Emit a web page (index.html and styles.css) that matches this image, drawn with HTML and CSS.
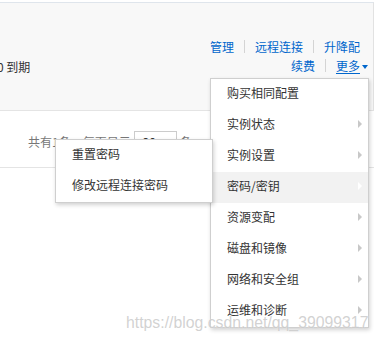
FILE: index.html
```html
<!DOCTYPE html>
<html lang="zh">
<head>
<meta charset="utf-8">
<link rel="stylesheet" href="styles.css">
</head>
<body>
<div class="page">
  <div class="panel">
    <div class="expire"><span class="cut">0 到期</span></div>
    <div class="ops">
      <div class="ops-line first">
        <a class="lnk">管理</a><span class="sep"></span><a class="lnk">远程连接</a><span class="sep"></span><a class="lnk">升降配</a>
      </div>
      <div class="ops-line">
        <a class="lnk">续费</a><span class="sep"></span><a class="lnk more">更多</a><span class="caret"></span>
      </div>
    </div>
  </div>
  <div class="pager">
    <span class="pager-text">共有1条，每页显示</span>
    <span class="pager-box">20</span>
    <span class="pager-text">条</span>
  </div>
</div>

<ul class="menu">
  <li class="item">购买相同配置</li>
  <li class="item sub">实例状态</li>
  <li class="item sub">实例设置</li>
  <li class="item sub active">密码/密钥</li>
  <li class="item sub">资源变配</li>
  <li class="item sub">磁盘和镜像</li>
  <li class="item sub">网络和安全组</li>
  <li class="item sub">运维和诊断</li>
</ul>

<ul class="submenu">
  <li class="item">重置密码</li>
  <li class="item">修改远程连接密码</li>
</ul>

<div class="watermark">https://blog.csdn.net/qq_39099317</div>
</body>
</html>
```

FILE: styles.css
```css
html, body {
  margin: 0;
  padding: 0;
  background: #fff;
}
body {
  width: 378px;
  height: 341px;
  overflow: hidden;
  position: relative;
  font-family: "Noto Sans CJK SC", "Noto Sans", sans-serif;
  font-size: 12px;
  color: #333;
}
.page {
  width: 374px;
  padding-top: 2px;
}
.panel {
  background: #f8f8f8;
  border-top: 1px solid #dfe5ec;
  border-right: 1px solid #e2e2e2;
  border-bottom: 1px solid #e4e4e4;
  height: 109px;
  box-sizing: border-box;
  display: flex;
  justify-content: space-between;
  align-items: flex-start;
}
.expire {
  padding-top: 54px;
  line-height: 19px;
  color: #333;
}
.cut {
  margin-left: -3px;
}
.ops {
  padding-top: 34px;
  padding-right: 5px;
  display: flex;
  flex-direction: column;
  align-items: flex-end;
}
.ops-line {
  display: flex;
  align-items: center;
  height: 19px;
}
.ops-line.first {
  margin-right: 8px;
}
.lnk {
  color: #0066cc;
  text-decoration: none;
}
.more {
  text-decoration: underline;
  text-underline-offset: 2px;
}
.sep {
  width: 1px;
  height: 13px;
  background: #d4d4d4;
  margin: 0 10px;
}
.caret {
  width: 0;
  height: 0;
  border-left: 3.5px solid transparent;
  border-right: 3.5px solid transparent;
  border-top: 4px solid #0066cc;
  margin-left: 2px;
  margin-top: 2px;
}
.pager {
  height: 57px;
  box-sizing: border-box;
  border-bottom: 1px solid #e4e4e4;
  display: flex;
  align-items: flex-start;
  padding-left: 28px;
  padding-top: 22px;
  color: #777;
}
.pager-text {
  line-height: 18px;
}
.pager-box {
  width: 43px;
  height: 22px;
  box-sizing: border-box;
  border: 1px solid #ccc;
  margin: -2px 3px 0 3px;
  padding-left: 8px;
  line-height: 20px;
  color: #333;
}

.menu, .submenu {
  list-style: none;
  margin: 0;
  padding: 0;
  position: absolute;
  background: #fff;
  border: 1px solid #cfcfcf;
  box-shadow: 1px 2px 4px rgba(0, 0, 0, 0.18);
}
.menu {
  left: 210px;
  top: 78px;
  width: 157px;
  z-index: 2;
}
.submenu {
  left: 55px;
  top: 139px;
  width: 156px;
  z-index: 3;
}
.item {
  height: 27px;
  line-height: 27px;
  padding-bottom: 4px;
  padding-left: 16px;
  color: #333;
  position: relative;
  white-space: nowrap;
}
.item.active {
  background: #f2f2f2;
}
.item.sub::after {
  content: "";
  position: absolute;
  right: 6px;
  top: 10px;
  width: 0;
  height: 0;
  border-top: 4px solid transparent;
  border-bottom: 4px solid transparent;
  border-left: 4px solid #c8c8c8;
}
.item.active::after {
  border-left-color: #fff;
}
.watermark {
  position: absolute;
  left: 126px;
  top: 313px;
  font-family: "Liberation Sans", Arial, sans-serif;
  font-size: 15.8px;
  line-height: 20px;
  color: rgba(165, 165, 165, 0.5);
  text-shadow: 0 0 1px rgba(255, 255, 255, 0.9);
  z-index: 5;
  white-space: nowrap;
}
```
